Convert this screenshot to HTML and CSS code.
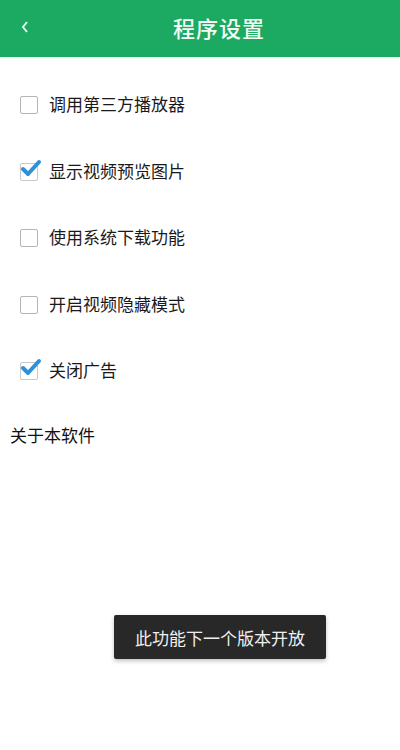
FILE: index.html
```html
<!DOCTYPE html>
<html lang="zh">
<head>
<meta charset="utf-8">
<link rel="stylesheet" href="styles.css">
</head>
<body>
<header class="bar">
  <span class="back"><svg width="10" height="14" viewBox="0 0 10 14"><path d="M7 2 L3 7 L7 12" fill="none" stroke="#dff5e8" stroke-width="2"/></svg></span>
  <h1 class="title">程序设置</h1>
</header>
<main class="list">
  <div class="row"><span class="box"></span><span class="label">调用第三方播放器</span></div>
  <div class="row"><span class="box checked"><svg class="tick" width="22" height="20" viewBox="0 0 22 20"><path d="M3 10 L8 15 L19 3" fill="none" stroke="#2f8fd8" stroke-width="4" stroke-linecap="round" stroke-linejoin="round"/></svg></span><span class="label">显示视频预览图片</span></div>
  <div class="row"><span class="box"></span><span class="label">使用系统下载功能</span></div>
  <div class="row"><span class="box"></span><span class="label">开启视频隐藏模式</span></div>
  <div class="row"><span class="box checked"><svg class="tick" width="22" height="20" viewBox="0 0 22 20"><path d="M3 10 L8 15 L19 3" fill="none" stroke="#2f8fd8" stroke-width="4" stroke-linecap="round" stroke-linejoin="round"/></svg></span><span class="label">关闭广告</span></div>
  <div class="about">关于本软件</div>
</main>
<div class="toast">此功能下一个版本开放</div>
</body>
</html>
```

FILE: styles.css
```css
html, body {
  margin: 0;
  padding: 0;
  background: #ffffff;
  font-family: "Noto Sans CJK SC", "Noto Sans", sans-serif;
  width: 400px;
  height: 750px;
  overflow: hidden;
}
.bar {
  height: 57px;
  background: #1caa62;
  display: flex;
  align-items: center;
  justify-content: center;
  position: relative;
  box-shadow: 0 1px 2px rgba(0,0,0,0.08);
}
.back {
  position: absolute;
  left: 20px;
  top: 20px;
  display: flex;
}
.title {
  margin: 0 0 3px 38px;
  font-size: 22px;
  font-weight: 500;
  color: #f2fbf5;
  letter-spacing: 1px;
}
.list {
  padding: 31px 0 0 0;
}
.row {
  height: 66.5px;
  display: flex;
  align-items: flex-start;
  padding-left: 20px;
}
.box {
  width: 16px;
  height: 16px;
  border: 1.5px solid #b5b5b5;
  border-radius: 2px;
  position: relative;
  margin-top: 8px;
}
.box.checked {
  border-color: #c8c8c8;
}
.tick {
  position: absolute;
  left: -1px;
  top: -5px;
}
.label {
  margin-left: 11px;
  font-size: 17px;
  line-height: 32px;
  color: #1a1a1a;
}
.about {
  padding-left: 10px;
  margin-top: -1px;
  font-size: 17px;
  line-height: 30px;
  color: #111111;
}
.toast {
  position: absolute;
  left: 114px;
  top: 615px;
  width: 212px;
  height: 44px;
  background: #282828;
  color: #f0f0f0;
  font-size: 17px;
  display: flex;
  align-items: center;
  justify-content: center;
  border-radius: 2px;
  box-shadow: 0 2px 4px rgba(0,0,0,0.25);
}
```
